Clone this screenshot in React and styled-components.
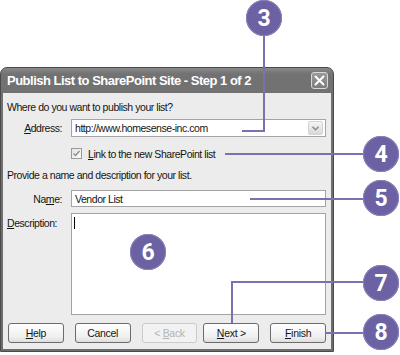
import React from 'react'
import styled, { createGlobalStyle } from 'styled-components'

const GlobalStyle = createGlobalStyle`
  html, body {
    margin: 0;
    padding: 0;
    background: #ffffff;
  }
  body {
    font-family: "Liberation Sans", Arial, sans-serif;
  }
`

const Stage = styled.div`
  position: relative;
  width: 400px;
  height: 355px;
  overflow: hidden;
  background: #ffffff;
  padding-top: 67px;
  box-sizing: border-box;
`

const Window = styled.div`
  width: 334px;
  box-sizing: border-box;
  background: linear-gradient(#8a8a8a 0px, #727272 6px, #6c6c6c 100%);
  border: 1px solid #4a4a4a;
  border-radius: 7px 7px 0 0;
  padding: 0 2px 2px 2px;
  display: flex;
  flex-direction: column;
`

const TitleBar = styled.div`
  height: 25px;
  display: flex;
  align-items: center;
  justify-content: space-between;
  padding: 0 3px 0 4px;
`

const Title = styled.h1`
  margin: 0;
  color: #ffffff;
  font-size: 13px;
  font-weight: bold;
  letter-spacing: -0.5px;
  white-space: nowrap;
`

const CloseButton = styled.div`
  width: 17px;
  height: 17px;
  box-sizing: border-box;
  border: 1px solid #d8d8d8;
  border-radius: 3px;
  background: linear-gradient(#9a9a9a, #7c7c7c);
  display: flex;
  align-items: center;
  justify-content: center;
`

const Body = styled.div`
  background: #ececec;
  padding: 8px 5px 6px 4px;
  display: flex;
  flex-direction: column;
  font-size: 10.5px;
  letter-spacing: -0.45px;
  color: #151515;
`

const Text = styled.div`
  height: 13px;
  line-height: 13px;
  margin-top: ${p => p.$mt || 0}px;
  white-space: nowrap;
`

const FieldRow = styled.div`
  display: grid;
  grid-template-columns: 55px 255px;
  column-gap: 9px;
  align-items: ${p => (p.$top ? 'start' : 'center')};
  margin-top: ${p => p.$mt}px;
  height: ${p => p.$h}px;
`

const Label = styled.label`
  text-align: ${p => (p.$left ? 'left' : 'right')};
  white-space: nowrap;
  padding-top: ${p => (p.$left ? 4 : 0)}px;
`

const Key = styled.span`
  text-decoration: underline;
  text-underline-offset: 1px;
`

const Field = styled.div`
  height: ${p => p.$h}px;
  box-sizing: border-box;
  background: #ffffff;
  border: 1px solid #a4a4a4;
  display: flex;
  align-items: ${p => (p.$top ? 'flex-start' : 'center')};
  padding: ${p => (p.$top ? '3px 2px' : '0 2px 0 3px')};
`

const FieldValue = styled.span`
  flex: 1;
  white-space: nowrap;
`

const Caret = styled.span`
  width: 1px;
  height: 12px;
  background: #000000;
`

const DropButton = styled.div`
  width: 15px;
  height: 14px;
  box-sizing: border-box;
  border: 1px solid #d4d4d4;
  border-radius: 2px;
  background: linear-gradient(#f4f4f4, #d9d9d9);
  display: flex;
  align-items: center;
  justify-content: center;
`

const CheckRow = styled.div`
  display: flex;
  align-items: center;
  gap: 6px;
  margin-top: ${p => p.$mt}px;
  margin-left: 64px;
  height: 13px;
`

const CheckBox = styled.div`
  width: 11px;
  height: 11px;
  box-sizing: border-box;
  border: 1px solid #9a9a9a;
  background: linear-gradient(135deg, #e4e4e4, #fbfbfb);
  display: flex;
  align-items: center;
  justify-content: center;
`

const ButtonRow = styled.div`
  display: flex;
  margin-top: 8px;
  margin-left: 1px;
  height: 20px;
`

const Button = styled.button`
  width: 56px;
  height: 20px;
  margin-left: ${p => p.$ml || 0}px;
  padding: 0;
  box-sizing: border-box;
  border: 1px solid ${p => (p.disabled ? '#cacaca' : '#6c6c6c')};
  border-radius: 3px;
  background: ${p => (p.disabled ? '#f2f2f2' : 'linear-gradient(#ffffff, #f0f0f0 70%, #dedede)')};
  color: ${p => (p.disabled ? '#b4b4b4' : '#151515')};
  font-family: "Liberation Sans", Arial, sans-serif;
  font-size: 10.5px;
  letter-spacing: -0.3px;
`

const Leaders = styled.svg`
  position: absolute;
  left: 0;
  top: 0;
  pointer-events: none;
`

const Badge = styled.div`
  position: absolute;
  left: ${p => p.$x - 18}px;
  top: ${p => p.$y - 18}px;
  width: 36px;
  height: 36px;
  border-radius: 50%;
  background: #6c62a3;
  box-shadow: inset 0 0 0 1px #8a82b8;
  color: #ffffff;
  font-family: Roboto, "Liberation Sans", sans-serif;
  font-weight: bold;
  font-size: 23px;
  display: flex;
  align-items: center;
  justify-content: center;
`

const badges = [
  { n: 3, x: 264, y: 18 },
  { n: 4, x: 381, y: 154 },
  { n: 5, x: 381, y: 198 },
  { n: 6, x: 148, y: 252 },
  { n: 7, x: 381, y: 283 },
  { n: 8, x: 381, y: 332 },
]

const leaderPaths = [
  'M264 34 V131 H242',
  'M225 154 H365',
  'M250 199 H365',
  'M365 282 H232 V323',
  'M325 333 H365',
]

const App = () => {
  return (
    <Stage>
      <GlobalStyle />
      <Window>
        <TitleBar>
          <Title>Publish List to SharePoint Site - Step 1 of 2</Title>
          <CloseButton>
            <svg width="11" height="11" viewBox="0 0 11 11">
              <path d="M1.5 1.5 L9.5 9.5 M9.5 1.5 L1.5 9.5" stroke="#fff" strokeWidth="2" strokeLinecap="round" />
            </svg>
          </CloseButton>
        </TitleBar>
        <Body>
          <Text>Where do you want to publish your list?</Text>
          <FieldRow $mt={5} $h={18}>
            <Label><Key>A</Key>ddress:</Label>
            <Field $h={18}>
              <FieldValue>http://www.homesense-inc.com</FieldValue>
              <DropButton>
                <svg width="7" height="5" viewBox="0 0 7 5">
                  <path d="M0.5 0.8 L3.5 3.8 L6.5 0.8" stroke="#8a8a8a" strokeWidth="1.5" fill="none" />
                </svg>
              </DropButton>
            </Field>
          </FieldRow>
          <CheckRow $mt={10}>
            <CheckBox>
              <svg width="7" height="7" viewBox="0 0 7 7">
                <path d="M0.5 3.5 L2.5 5.5 L6.5 1" stroke="#8c8c8c" strokeWidth="1.4" fill="none" />
              </svg>
            </CheckBox>
            <span><Key>L</Key>ink to the new SharePoint list</span>
          </CheckRow>
          <Text $mt={9}>Provide a name and description for your list.</Text>
          <FieldRow $mt={8} $h={17}>
            <Label>Na<Key>m</Key>e:</Label>
            <Field $h={17}>
              <FieldValue>Vendor List</FieldValue>
            </Field>
          </FieldRow>
          <FieldRow $mt={6} $h={102} $top>
            <Label $left><Key>D</Key>escription:</Label>
            <Field $h={102} $top>
              <Caret />
            </Field>
          </FieldRow>
          <ButtonRow>
            <Button><Key>H</Key>elp</Button>
            <Button $ml={11}>Cancel</Button>
            <Button $ml={11} disabled>&lt; <Key>B</Key>ack</Button>
            <Button $ml={6}><Key>N</Key>ext &gt;</Button>
            <Button $ml={11}><Key>F</Key>inish</Button>
          </ButtonRow>
        </Body>
      </Window>
      <Leaders width="400" height="355">
        {leaderPaths.map(d => (
          <path key={d} d={d} stroke="#7a71b2" strokeWidth="2" fill="none" />
        ))}
      </Leaders>
      {badges.map(b => (
        <Badge key={b.n} $x={b.x} $y={b.y}>{b.n}</Badge>
      ))}
    </Stage>
  )
}

export default App
